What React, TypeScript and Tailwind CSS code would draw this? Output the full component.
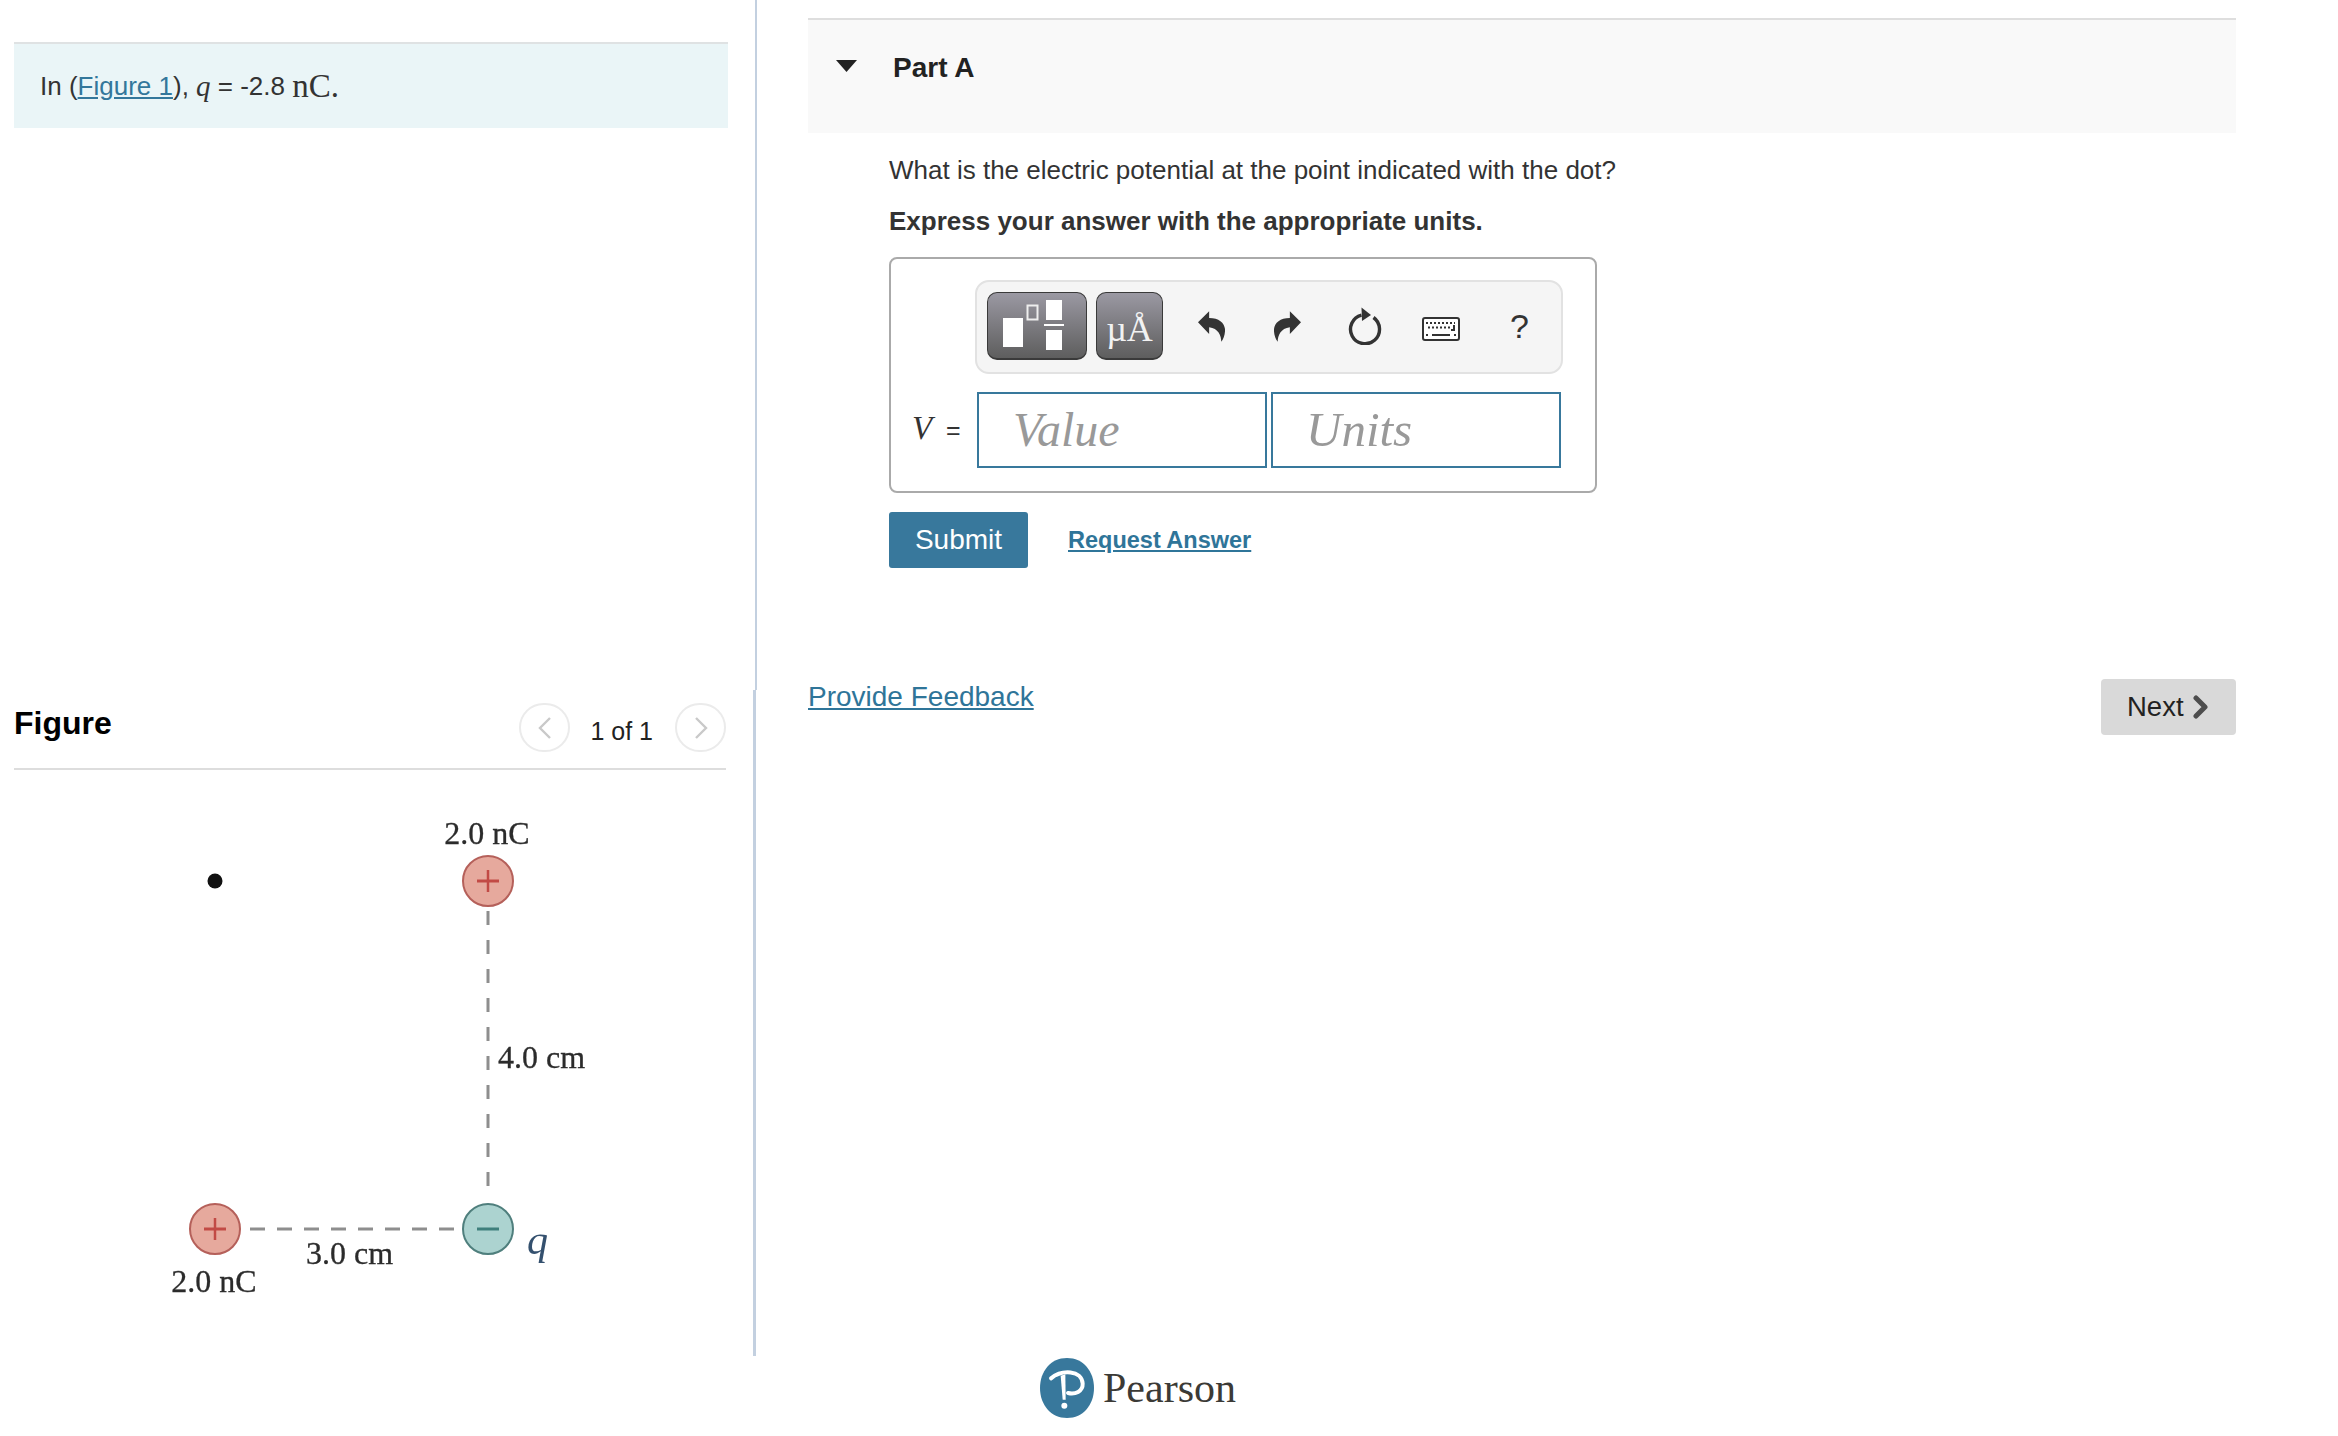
import React from 'react';

const SANS = "font-['Liberation_Sans',Arial,sans-serif]";
const SERIF = "font-['Liberation_Serif','Times_New_Roman',serif]";

function UndoIcon({ flip }: { flip?: boolean }) {
  return (
    <svg viewBox="55 92 80 91" className={`w-[27px] h-[31px] ${flip ? '-scale-x-100' : ''}`}>
      <path
        d="M55 125 L88 92 V112 C120 112 137 130 135 152 C134 165 130 175 124 183 C124 165 115 143 88 140 V160 Z"
        fill="#333"
      />
    </svg>
  );
}

function ReloadIcon() {
  return (
    <svg viewBox="0 0 36 38" className="w-[36px] h-[38px]">
      <path d="M26.5 10.5 A14.5 14.5 0 1 1 14.5 8.2" fill="none" stroke="#333" strokeWidth="3.4" />
      <path d="M14.5 0.5 L24 8 L15 14 Z" fill="#333" />
    </svg>
  );
}

function KeyboardIcon() {
  return (
    <svg viewBox="0 0 38 24" className="w-[38px] h-[24px]">
      <rect x="1" y="1" width="36" height="22" rx="2" fill="#fff" stroke="#333" strokeWidth="2" />
      <path d="M4 6 H33" stroke="#333" strokeWidth="2" strokeDasharray="2 2" />
      <path d="M6 10.5 H29" stroke="#333" strokeWidth="2" strokeDasharray="2 2" />
      <path d="M32 8 V13 H29" fill="none" stroke="#333" strokeWidth="2" />
      <path d="M4 18 H6 M10 18 H28 M32 18 H34" stroke="#333" strokeWidth="2" />
    </svg>
  );
}

function PearsonLogo() {
  return (
    <svg viewBox="60 55 162 180" className="w-[54px] h-[60px]">
      <path d="M141 55 C190 55 222 95 222 145 C222 195 190 235 141 235 C92 235 60 195 60 145 C60 95 92 55 141 55 Z" fill="#38789c" />
      <path d="M93 116 C125 90 186 90 188 132 C189 156 165 165 144 160" fill="none" stroke="#fff" strokeWidth="12" strokeLinecap="round" />
      <path d="M122 108 L128 180 H137 L136 104 Z" fill="#fff" />
      <circle cx="133" cy="198" r="9" fill="#fff" />
    </svg>
  );
}

function Charge({ x, y, negative }: { x: number; y: number; negative?: boolean }) {
  const mark = negative ? '#3f7f7c' : '#c24a45';
  return (
    <g>
      <circle cx={x} cy={y} r="25" fill={negative ? '#acd3d0' : '#e6a99d'} stroke={negative ? '#4f7f7d' : '#b5605a'} strokeWidth="2" />
      <path d={`M${x - 11} ${y} H${x + 11}`} stroke={mark} strokeWidth="3" />
      {!negative && <path d={`M${x} ${y - 11} V${y + 11}`} stroke={mark} strokeWidth="2.5" />}
    </g>
  );
}

function FigureDrawing() {
  return (
    <svg viewBox="0 770 755 585" className="w-[755px] h-[585px] blur-[0.4px]">
      <circle cx="215" cy="881" r="7.5" fill="#111" />
      <path d="M488 911 V1200" stroke="#8e8e8e" strokeWidth="3" strokeDasharray="14 15" />
      <path d="M250 1229 H456" stroke="#8e8e8e" strokeWidth="3" strokeDasharray="15 12" />
      <Charge x={488} y={881} />
      <Charge x={215} y={1229} />
      <Charge x={488} y={1229} negative />
      <g fontFamily="'Liberation Serif', serif" fontSize="32" fontWeight="400" stroke="#2b2b2b" strokeWidth="0.3" fill="#2b2b2b">
        <text x="487" y="844" textAnchor="middle">2.0 nC</text>
        <text x="214" y="1292" textAnchor="middle">2.0 nC</text>
        <text x="498" y="1068">4.0 cm</text>
        <text x="306" y="1264">3.0 cm</text>
      </g>
      <text x="527" y="1254" fontFamily="'Liberation Serif', serif" fontSize="42" fontStyle="italic" fill="#34506e">q</text>
    </svg>
  );
}

function NavCircle({ next }: { next?: boolean }) {
  return (
    <div className="w-[51px] h-[49px] rounded-full border-2 border-[#ebebeb] flex items-center justify-center">
      <svg viewBox="0 0 14 24" className="w-[14px] h-[24px]">
        <path d={next ? 'M2 2 L12 12 L2 22' : 'M12 2 L2 12 L12 22'} fill="none" stroke="#c9c9c9" strokeWidth="2.4" />
      </svg>
    </div>
  );
}

export default function App() {
  return (
    <div className={`w-[2338px] h-[1436px] bg-white flex overflow-hidden text-[#333] ${SANS}`}>
      <div className="w-[757px] shrink-0">
        <div className="h-[690px] border-r-2 border-[#c3d0e0] pt-[42px] pl-[14px] pr-[27px]">
          <div className="h-[86px] bg-[#eaf5f7] border-t-2 border-[#dfe2e3] pl-[26px] flex items-center text-[26px] leading-[32px] whitespace-pre">
            In (<a className="text-[#33779b] underline">Figure 1</a>), <span className={`${SERIF} italic text-[29px]`}>q</span> = -2.8 <span className={`${SERIF} text-[33px]`}>nC</span><span className={`${SERIF} text-[33px]`}>.</span>
          </div>
        </div>
        <div className="w-[756px] h-[666px] border-r-[3px] border-[#c3d0e0]">
          <div className="ml-[14px] w-[712px] h-[80px] border-b-2 border-[#dddddd] flex items-start pt-[11px]">
            <h2 className="text-[32px] leading-[44px] font-bold text-black">Figure</h2>
            <div className="ml-auto flex items-center mt-[2px]">
              <NavCircle />
              <span className="ml-[20px] mr-[22px] text-[25px] leading-[32px] mt-[6px] text-[#222]">1 of 1</span>
              <NavCircle next />
            </div>
          </div>
          <FigureDrawing />
        </div>
      </div>

      <div className="flex-1 flex flex-col pt-[18px]">
        <div className="ml-[51px] w-[1428px] h-[115px] bg-[#f9f9f9] border-t-2 border-[#dedede] flex items-start">
          <svg viewBox="0 0 21 12" className="ml-[28px] mt-[40px] w-[21px] h-[12px]">
            <path d="M0 0 H21 L10.5 12 Z" fill="#222" />
          </svg>
          <h3 className="ml-[36px] mt-[30px] text-[28px] leading-[36px] font-bold text-[#222]">Part A</h3>
        </div>

        <div className="ml-[132px]">
          <p className="mt-[20px] text-[26px] leading-[34px]">What is the electric potential at the point indicated with the dot?</p>
          <p className="mt-[17px] text-[26px] leading-[34px] font-bold">Express your answer with the appropriate units.</p>

          <div className="mt-[19px] w-[708px] h-[236px] border-2 border-[#aaaaaa] rounded-[8px] pt-[21px]">
            <div className="ml-[84px] w-[588px] h-[94px] bg-[#f5f5f5] border-2 border-[#e2e2e2] rounded-[14px] pl-[10px] pb-[2px] flex items-center">
              <button className="w-[100px] h-[68px] rounded-[10px] border border-[#3a3a3a] border-b-2 bg-gradient-to-b from-[#9b99a3] to-[#5e5e5e]">
                <svg viewBox="0 0 98 66" className="w-[98px] h-[66px]">
                  <rect x="15" y="25" width="20" height="29" fill="#fff" />
                  <rect x="39.5" y="12.5" width="10" height="14" fill="none" stroke="#eee" strokeWidth="2" />
                  <rect x="58" y="7" width="16" height="20" fill="#fff" />
                  <rect x="56" y="31" width="20" height="2" fill="#fff" />
                  <rect x="58" y="37" width="16" height="20" fill="#fff" />
                </svg>
              </button>
              <button className={`ml-[9px] w-[67px] h-[68px] rounded-[10px] border border-[#3a3a3a] border-b-2 bg-gradient-to-b from-[#9b99a3] to-[#5e5e5e] text-[#f2f2f2] text-[36px] leading-[64px] pt-[4px] ${SERIF}`}>µÅ</button>
              <div className="ml-[35px] flex items-center"><UndoIcon /></div>
              <div className="ml-[49px] flex items-center"><UndoIcon flip /></div>
              <div className="ml-[46px] flex items-center"><ReloadIcon /></div>
              <div className="ml-[39px] mt-[5px] flex items-center"><KeyboardIcon /></div>
              <span className="ml-[50px] text-[34px] leading-[36px] text-[#333]">?</span>
            </div>

            <div className="mt-[18px] flex items-center">
              <div className="w-[86px] pl-[21px] pb-[3px] whitespace-pre text-[25px]">
                <span className={`${SERIF} italic text-[33px]`}>V</span>  =
              </div>
              <div className={`w-[290px] h-[76px] border-2 border-[#38789c] pl-[34px] ${SERIF} italic text-[48px] leading-[72px] text-[#999]`}>Value</div>
              <div className={`ml-[4px] w-[290px] h-[76px] border-2 border-[#38789c] pl-[33px] ${SERIF} italic text-[49px] leading-[72px] text-[#999]`}>Units</div>
            </div>
          </div>

          <div className="mt-[19px] flex items-center">
            <button className="w-[139px] h-[56px] bg-[#38789c] rounded-[3px] text-white text-[28px] leading-[56px]">Submit</button>
            <a className="ml-[40px] text-[23.5px] leading-[32px] font-bold text-[#2f7599] underline">Request Answer</a>
          </div>
        </div>

        <div className="ml-[51px] mt-[111px] w-[1428px] flex items-start justify-between">
          <a className="text-[28px] leading-[36px] text-[#2f7599] underline">Provide Feedback</a>
          <button className="w-[135px] h-[56px] bg-[#d9d9d9] rounded-[4px] flex items-center pl-[26px] text-[27.5px] text-[#222]">
            Next
            <svg viewBox="0 0 15 24" className="ml-[9px] w-[15px] h-[24px]">
              <path d="M3 3 L12 12 L3 21" fill="none" stroke="#4d4d4d" strokeWidth="5" strokeLinecap="round" strokeLinejoin="round" />
            </svg>
          </button>
        </div>

        <div className="mt-auto mb-[18px] ml-[283px] flex items-center">
          <PearsonLogo />
          <span className={`ml-[9px] ${SERIF} text-[42px] leading-[60px] text-[#3b3a36]`}>Pearson</span>
        </div>
      </div>
    </div>
  );
}
